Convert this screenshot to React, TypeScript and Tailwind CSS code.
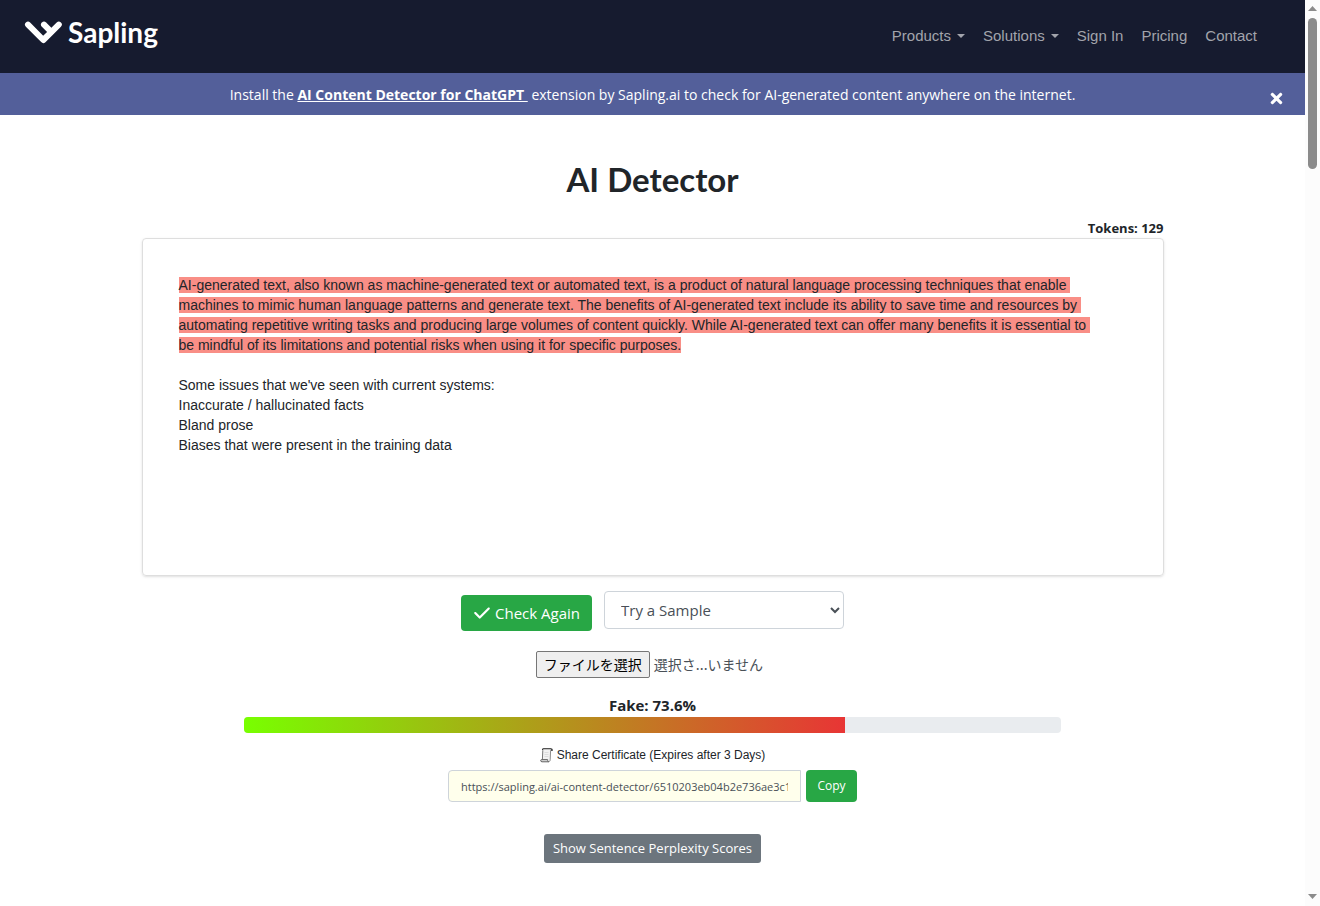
import { useRef, useState } from "react";
import { FaTimes } from "react-icons/fa";
import { FaCheck } from "react-icons/fa6";

const SHARE_URL = "https://sapling.ai/ai-content-detector/6510203eb04b2e736ae3c1f59d27";

const navLinks = [
    { label: "Products", hasMenu: true },
    { label: "Solutions", hasMenu: true },
    { label: "Sign In", hasMenu: false },
    { label: "Pricing", hasMenu: false },
    { label: "Contact", hasMenu: false },
];

const issues = [
    "Some issues that we've seen with current systems:",
    "Inaccurate / hallucinated facts",
    "Bland prose",
    "Biases that were present in the training data",
];

function Logo() {
    return (
        <a href="#" className="flex items-center gap-1.5 text-white">
            <svg width="38" height="24" viewBox="0 0 38 24" fill="none" stroke="currentColor" strokeWidth="6" aria-hidden="true">
                <path d="M4 4.6 19.3 20 34.8 4.6" strokeLinecap="round" strokeLinejoin="round" />
                <path d="M20 4.6 27 11.6" strokeLinecap="round" />
            </svg>
            <span className="font-['Lato','Liberation_Sans',sans-serif] text-[28px] leading-8 font-bold">Sapling</span>
        </a>
    );
}

function Navbar() {
    return (
        <header className="flex h-[73px] items-start justify-between bg-[#161b2f] pr-12 pl-6">
            <div className="pt-4">
                <Logo />
            </div>
            <nav className="flex gap-[18px] pt-6 font-['Liberation_Sans',sans-serif] text-[15px] leading-6 text-[#a2a4ac]">
                {navLinks.map((link) => (
                    <a key={link.label} href="#" className="flex items-center gap-1.5">
                        {link.label}
                        {link.hasMenu && (
                            <svg width="8" height="4" viewBox="0 0 8 4" fill="currentColor" aria-hidden="true">
                                <path d="M0 0h8L4 4z" />
                            </svg>
                        )}
                    </a>
                ))}
            </nav>
        </header>
    );
}

function Banner({ onClose }: { onClose: () => void }) {
    return (
        <div className="flex h-[42px] items-center bg-[#535f9a] text-[14px] text-white">
            <p className="flex-1 pl-[52px] text-center">
                Install the{" "}
                <a href="#" className="font-bold whitespace-pre underline">{"AI Content Detector for ChatGPT "}</a>
                {" "}extension by Sapling.ai to check for AI-generated content anywhere on the internet.
            </p>
            <button type="button" aria-label="Close" onClick={onClose} className="w-[52px] pt-2 pl-[15px] text-[17px]">
                <FaTimes />
            </button>
        </div>
    );
}

// Little scroll drawn beside the certificate label
function ScrollIcon() {
    return (
        <svg width="13" height="15" viewBox="0 0 13 15" fill="none" aria-hidden="true">
            <path d="M2.8 1.4h7.8L10 12.4l-1 1.2H1.6L2.6 11z" fill="#f1f1f1" />
            <path d="M2.8 2.2 2.4 11.4" stroke="#777" />
            <path d="M10.6 2.6 10.2 11.8c0 1-.5 1.8-1.4 1.8" stroke="#8c8c8c" />
            <path d="M2.4 1.8C2.6 1 3 .8 3.6.8h7.2c.9 0 1.5.6 1.5 1.4h-1.6" stroke="#1d1d1d" strokeWidth="1.1" />
            <path d="M8.8 13.8H2C1.2 13.8.7 13.3.7 12.6c0-.6.3-1 .9-1h6c0 1.4.3 2 1.2 2.2Z" fill="#d9d9d9" stroke="#555" strokeWidth=".9" />
            <path d="M4.5 4.5h4M4.5 6.5h4M4.5 8.5h4" stroke="#dcdcdc" />
        </svg>
    );
}

function Scrollbar() {
    return (
        <aside className="sticky top-0 flex h-screen w-[15px] shrink-0 flex-col items-center bg-[#fcfcfc] pt-1.5 pb-[7px] text-[#8b8b8b]" aria-hidden="true">
            <svg width="9" height="5" viewBox="0 0 9 5" fill="currentColor">
                <path d="M0 5h9L4.5 0z" />
            </svg>
            <div className="mt-[7px] h-[151px] w-[9px] rounded-full bg-[#8b8b8b]" />
            <svg className="mt-auto" width="9" height="5" viewBox="0 0 9 5" fill="currentColor">
                <path d="M0 0h9L4.5 5z" />
            </svg>
        </aside>
    );
}

export default function App() {
    const [showBanner, setShowBanner] = useState(true);
    const [fileName, setFileName] = useState("選択さ...いません");
    const shareRef = useRef<HTMLInputElement>(null);
    const fakeScore = 73.6;

    const handleCopy = () => {
        shareRef.current?.select();
        navigator.clipboard?.writeText(SHARE_URL);
    };

    return (
        <div className="flex min-h-screen bg-white font-['Open_Sans','Noto_Sans_CJK_JP',sans-serif] text-[#212529]">
            <div className="min-w-0 flex-1">
                <Navbar />
                {showBanner && <Banner onClose={() => setShowBanner(false)} />}

                <main className="mx-auto flex max-w-[1022px] flex-col items-center pt-10 pb-10">
                    <h1 className="font-['Lato','Liberation_Sans',sans-serif] text-[33px] leading-[48px] font-bold">AI Detector</h1>

                    <div className="mt-4 self-end text-[13px] leading-[19px] font-bold">Tokens: 129</div>
                    <div className="min-h-[338px] w-full rounded border border-[#dedede] px-9 pt-9 font-['Liberation_Sans',sans-serif] text-[14px] leading-5 shadow-sm">
                        <p className="max-w-[920px] whitespace-pre-wrap">
                            <mark className="bg-[#f98e86] text-inherit">
                                AI-generated text, also known as machine-generated text or automated text, is a product of natural language processing techniques that enable machines to mimic human language patterns and generate text. The benefits of AI-generated text include its ability to save time and resources by automating repetitive writing tasks and producing large volumes of content quickly. While AI-generated text can offer many benefits it is essential to be mindful of its limitations and potential risks when using it for specific purposes.
                            </mark>
                        </p>
                        <div className="mt-5">
                            {issues.map((line) => (
                                <p key={line}>{line}</p>
                            ))}
                        </div>
                    </div>

                    <div className="mt-[15px] flex items-start gap-3">
                        <button type="button" className="mt-1 flex h-9 items-center gap-1 rounded bg-[#28a745] px-3 text-[15px] text-white">
                            <FaCheck className="text-[18px]" />
                            Check Again
                        </button>
                        <select aria-label="Try a Sample" className="h-[38px] w-60 rounded border border-[#ced4da] bg-white px-3 text-[15px] text-[#495057]">
                            <option>Try a Sample</option>
                            <option>GPT Sample</option>
                            <option>Human Sample</option>
                        </select>
                    </div>

                    <label className="mt-5 flex items-center gap-1 pr-1.5 font-['Noto_Sans_CJK_JP',sans-serif] text-[14px] leading-[25px] text-[#495057]">
                        <input
                            type="file"
                            className="sr-only"
                            onChange={(e) => setFileName(e.target.files?.[0]?.name ?? "選択さ...いません")}
                        />
                        <span className="rounded-xs border border-[#767676] bg-[#efefef] px-[7px] text-black">ファイルを選択</span>
                        <span>{fileName}</span>
                    </label>

                    <div className="mt-4 text-[15px] leading-[23px] font-bold">Fake: {fakeScore}%</div>
                    <div className="h-4 w-4/5 overflow-hidden rounded bg-[#e9ecef]">
                        <div className="h-full bg-linear-to-r/srgb from-[#78ff00] to-[#e83535]" style={{ width: `${fakeScore}%` }} />
                    </div>

                    <label htmlFor="share" className="mt-3 flex items-center gap-1 font-['Liberation_Sans',sans-serif] text-[12px] leading-5">
                        <ScrollIcon />
                        Share Certificate (Expires after 3 Days)
                    </label>
                    <div className="mt-[5px] flex gap-[5px]">
                        <input
                            id="share"
                            ref={shareRef}
                            readOnly
                            value={SHARE_URL}
                            className="h-8 w-[353px] rounded-l border border-[#ced4da] bg-[#ffffec] px-3 text-[11px] text-[#495057]"
                        />
                        <button type="button" onClick={handleCopy} className="h-8 w-[51px] rounded bg-[#28a745] text-[12px] text-white">Copy</button>
                    </div>

                    <button type="button" className="mt-8 h-[29px] rounded-[3px] bg-[#6c757d] px-[9px] text-[13px] text-white">
                        Show Sentence Perplexity Scores
                    </button>
                </main>
            </div>
            <Scrollbar />
        </div>
    );
}
